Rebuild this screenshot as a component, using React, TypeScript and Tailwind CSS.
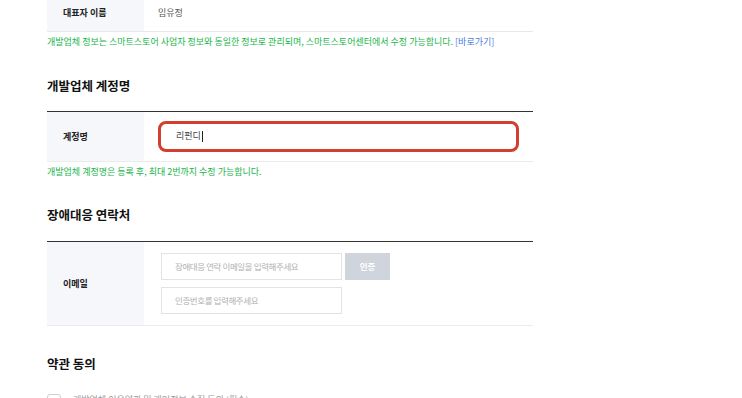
import React from 'react';

const font = { fontFamily: "'Noto Sans CJK KR', 'Noto Sans', sans-serif" };

function Notice({ children }: { children: React.ReactNode }) {
    return <p className="text-[9px] leading-[12px] text-[#17b54a]">{children}</p>;
}

function Heading({ children, className }: { children: React.ReactNode; className: string }) {
    return <h2 className={`text-[12.5px] leading-[16px] font-bold text-[#111] ${className}`}>{children}</h2>;
}

function Label({ children }: { children: React.ReactNode }) {
    return (
        <div className="w-[97px] shrink-0 bg-[#f5f7fa] pl-[16px] flex items-center text-[9px] font-bold text-[#222]">
            {children}
        </div>
    );
}

export default function App() {
    return (
        <div className="w-[742px] h-[398px] overflow-hidden bg-white" style={font}>
            <div className="w-[486px] ml-[47px]">
                {/* 대표자 이름 */}
                <div className="-mt-[5px] h-[37px] flex border-b border-[#e8e8e8]">
                    <Label>대표자 이름</Label>
                    <div className="flex items-center pl-[14px] text-[9px] text-[#555]">임유정</div>
                </div>
                <div className="mt-[4px]">
                    <Notice>
                        개발업체 정보는 스마트스토어 사업자 정보와 동일한 정보로 관리되며, 스마트스토어센터에서 수정
                        가능합니다. <span className="text-[#4a7de0]">[바로가기]</span>
                    </Notice>
                </div>

                <Heading className="mt-[30px]">개발업체 계정명</Heading>
                <div className="mt-[17px] h-[51px] flex border-t border-[#333] border-b border-b-[#ececec]">
                    <Label>계정명</Label>
                    <div className="flex-1 flex items-center pl-[14px] pb-[1px]">
                        <div className="w-[361px] h-[31px] rounded-[8px] border-[3px] border-[#d23f2f] flex items-center pl-[15px] text-[9px] text-[#444]">
                            리펀디<span className="ml-[1px] w-px h-[11px] bg-[#222]" />
                        </div>
                    </div>
                </div>
                <div className="mt-[4px]">
                    <Notice>개발업체 계정명은 등록 후, 최대 2번까지 수정 가능합니다.</Notice>
                </div>

                <Heading className="mt-[29px]">장애대응 연락처</Heading>
                <div className="mt-[18px] h-[85px] flex border-t border-[#333] border-b border-b-[#ececec]">
                    <Label>이메일</Label>
                    <div className="flex flex-col gap-[7px] pl-[17px] pt-[11px]">
                        <div className="flex gap-[3px]">
                            <div className="w-[181px] h-[27px] border border-[#e3e3e3] flex items-center pl-[13px] text-[8.5px] tracking-[-0.4px] text-[#b0b0b0]">
                                장애대응 연락 이메일을 입력해주세요
                            </div>
                            <div className="w-[45px] h-[27px] bg-[#d0d4dc] flex items-center justify-center text-[8.5px] font-bold text-white">
                                인증
                            </div>
                        </div>
                        <div className="w-[181px] h-[27px] border border-[#e3e3e3] flex items-center pl-[13px] text-[8.5px] tracking-[-0.4px] text-[#b0b0b0]">
                            인증번호를 입력해주세요
                        </div>
                    </div>
                </div>

                <Heading className="mt-[30px]">약관 동의</Heading>
                <div className="mt-[22px] flex items-start gap-[12px]">
                    <div className="w-[14px] h-[14px] rounded-[3px] border border-[#cfcfcf]" />
                    <span className="text-[9px] leading-[12px] text-[#999]">
                        개발업체 이용약관 및 개인정보 수집 동의 (필수)
                    </span>
                </div>
            </div>
        </div>
    );
}
